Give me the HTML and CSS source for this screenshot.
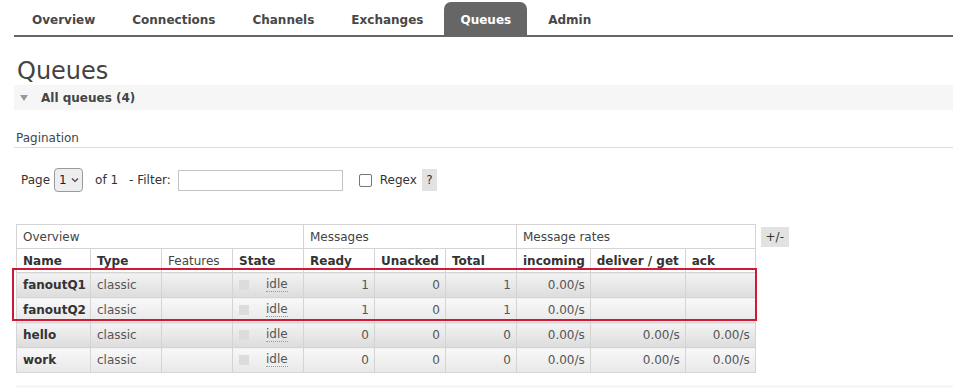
FILE: index.html
```
<!DOCTYPE html>
<html>
<head>
<meta charset="utf-8">
<link rel="stylesheet" href="styles.css">
</head>
<body>
<ul class="tabs">
  <li class="tab">Overview</li>
  <li class="tab">Connections</li>
  <li class="tab">Channels</li>
  <li class="tab">Exchanges</li>
  <li class="tab active">Queues</li>
  <li class="tab">Admin</li>
</ul>
<h1 class="title">Queues</h1>
<div class="section-bar"><span class="tri"></span><span class="section-title">All queues (4)</span></div>
<div class="pag-title">Pagination</div>
<div class="pag-row">
  <span class="lbl">Page</span>
  <span class="select">1<svg class="chev" width="8" height="6" viewBox="0 0 8 6"><path d="M1 1.5 L4 4.5 L7 1.5" fill="none" stroke="#444" stroke-width="1.2"/></svg></span>
  <span class="lbl of">of 1</span>
  <span class="lbl filt">- Filter:</span>
  <span class="input"></span>
  <span class="check"></span>
  <span class="lbl regex">Regex</span>
  <span class="help">?</span>
</div>
<div class="table-row">
  <div class="table-wrap">
    <table class="list">
      <thead>
        <tr class="grp">
          <th colspan="4">Overview</th>
          <th colspan="3">Messages</th>
          <th colspan="3">Message rates</th>
        </tr>
        <tr class="cols">
          <th class="w-name">Name</th>
          <th class="w71">Type</th>
          <th class="w71 normal">Features</th>
          <th class="w71">State</th>
          <th class="w71">Ready</th>
          <th class="w71">Unacked</th>
          <th class="w71">Total</th>
          <th class="w72">incoming</th>
          <th class="w96">deliver / get</th>
          <th class="w70">ack</th>
        </tr>
      </thead>
      <tbody>
        <tr class="alt1">
          <td class="name">fanoutQ1</td><td>classic</td><td></td>
          <td><span class="state"><span class="sq"></span><abbr class="idle">idle</abbr></span></td>
          <td class="r">1</td><td class="r">0</td><td class="r">1</td><td class="r">0.00/s</td><td></td><td></td>
        </tr>
        <tr class="alt2">
          <td class="name">fanoutQ2</td><td>classic</td><td></td>
          <td><span class="state"><span class="sq"></span><abbr class="idle">idle</abbr></span></td>
          <td class="r">1</td><td class="r">0</td><td class="r">1</td><td class="r">0.00/s</td><td></td><td></td>
        </tr>
        <tr class="alt1">
          <td class="name">hello</td><td>classic</td><td></td>
          <td><span class="state"><span class="sq"></span><abbr class="idle">idle</abbr></span></td>
          <td class="r">0</td><td class="r">0</td><td class="r">0</td><td class="r">0.00/s</td><td class="r">0.00/s</td><td class="r">0.00/s</td>
        </tr>
        <tr class="alt2">
          <td class="name">work</td><td>classic</td><td></td>
          <td><span class="state"><span class="sq"></span><abbr class="idle">idle</abbr></span></td>
          <td class="r">0</td><td class="r">0</td><td class="r">0</td><td class="r">0.00/s</td><td class="r">0.00/s</td><td class="r">0.00/s</td>
        </tr>
      </tbody>
    </table>
    <div class="highlight"></div>
  </div>
  <span class="plusminus">+/-</span>
</div>
<div class="next-bar"></div>
</body>
</html>
```
FILE: styles.css
```
html, body {
  margin: 0;
  padding: 0;
  background: #fff;
}
body {
  font-family: "DejaVu Sans", Verdana, sans-serif;
  font-size: 12px;
  color: #444;
  height: 388px;
  overflow: hidden;
}
.tabs {
  list-style: none;
  margin: 0 0 0 14px;
  padding: 2px 0 0 2px;
  display: flex;
  border-bottom: 2px solid #666;
}
.tab {
  height: 33px;
  box-sizing: border-box;
  padding: 3px 16px 0;
  line-height: 30px;
  margin-right: 5px;
  font-weight: bold;
  color: #484848;
  border-radius: 7px 7px 0 0;
}
.tab.active {
  background: #666;
  color: #fff;
}
.title {
  margin: 20px 0 0 17px;
  font-size: 24px;
  line-height: 28px;
  font-weight: normal;
  color: #444;
}
.section-bar {
  margin-left: 14px;
  height: 25px;
  background: #f6f6f6;
  display: flex;
  align-items: center;
}
.tri {
  width: 0;
  height: 0;
  margin-left: 6px;
  border-left: 4.5px solid transparent;
  border-right: 4.5px solid transparent;
  border-top: 6px solid #999;
}
.section-title {
  margin-left: 13px;
  font-weight: bold;
  color: #444;
}
.pag-title {
  margin: 21px 0 0 14px;
  padding: 0 0 1px 2px;
  line-height: 15px;
  border-bottom: 1px solid #ddd;
  color: #444;
}
.pag-row {
  margin: 20px 0 0 21px;
  height: 24px;
  display: flex;
  align-items: center;
}
.lbl {
  color: #333;
}
.select {
  margin-left: 4px;
  width: 29px;
  height: 24px;
  box-sizing: border-box;
  border: 1px solid #9a9a9a;
  border-radius: 4px;
  background: #eeeef0;
  display: flex;
  align-items: center;
  padding-left: 4px;
  gap: 4px;
  color: #222;
}
.chev {
  display: block;
}
.of {
  margin-left: 12px;
}
.filt {
  margin-left: 11px;
}
.input {
  margin-left: 7px;
  width: 165px;
  height: 21px;
  box-sizing: border-box;
  border: 1px solid #c4c4c4;
  background: #fff;
}
.check {
  margin-left: 16px;
  width: 13px;
  height: 13px;
  box-sizing: border-box;
  border: 1.5px solid #777;
  border-radius: 2px;
}
.regex {
  margin-left: 8px;
}
.help {
  margin-left: 5px;
  width: 15px;
  height: 22px;
  line-height: 22px;
  text-align: center;
  background: #e2e2e2;
  color: #333;
}
.table-row {
  margin: 32px 0 0 16px;
  display: flex;
  align-items: flex-start;
  gap: 5px;
}
.table-wrap {
  position: relative;
}
.list {
  border-collapse: collapse;
  border: 1px solid #d4d4d4;
}
.list th, .list td {
  border: 1px solid #d4d4d4;
  padding: 0 5px 0 6px;
  text-align: left;
  white-space: nowrap;
}
.list th {
  height: 23px;
  background: #fff;
  color: #333;
}
.list tr.grp th {
  font-weight: normal;
  color: #444;
}
.list th.normal {
  font-weight: normal;
  color: #444;
}
.list td {
  height: 24px;
  color: #555;
}
.w-name { width: 67px; }
.w71 { width: 59px; }
.w70 { width: 58px; }
.w72 { width: 60px; }
.w96 { width: 83px; }
.list th.w-name, .list td.name {
  padding-right: 0;
}
.list td.name {
  font-weight: bold;
  color: #333;
}
.list td.r {
  text-align: right;
}
.alt1 td {
  background: linear-gradient(to bottom, #f3f3f3, #dcdcdc);
}
.alt2 td {
  background: linear-gradient(to bottom, #f8f8f8, #e8e8e8);
}
.state {
  display: flex;
  align-items: center;
}
.sq {
  width: 10px;
  height: 10px;
  background: #dcdcdc;
}
.idle {
  margin-left: 17px;
  text-decoration: none;
  border-bottom: 1px dotted #999;
  line-height: 13px;
}
.highlight {
  position: absolute;
  left: -4px;
  top: 44px;
  width: 745px;
  height: 53px;
  box-sizing: border-box;
  border: 2px solid #cf1a36;
  pointer-events: none;
}
.plusminus {
  margin-top: 3px;
  width: 28px;
  height: 20px;
  line-height: 20px;
  text-align: center;
  background: #e2e2e2;
  color: #333;
}
.next-bar {
  margin: 12px 0 0 16px;
  height: 25px;
  background: #f6f6f6;
}
```
